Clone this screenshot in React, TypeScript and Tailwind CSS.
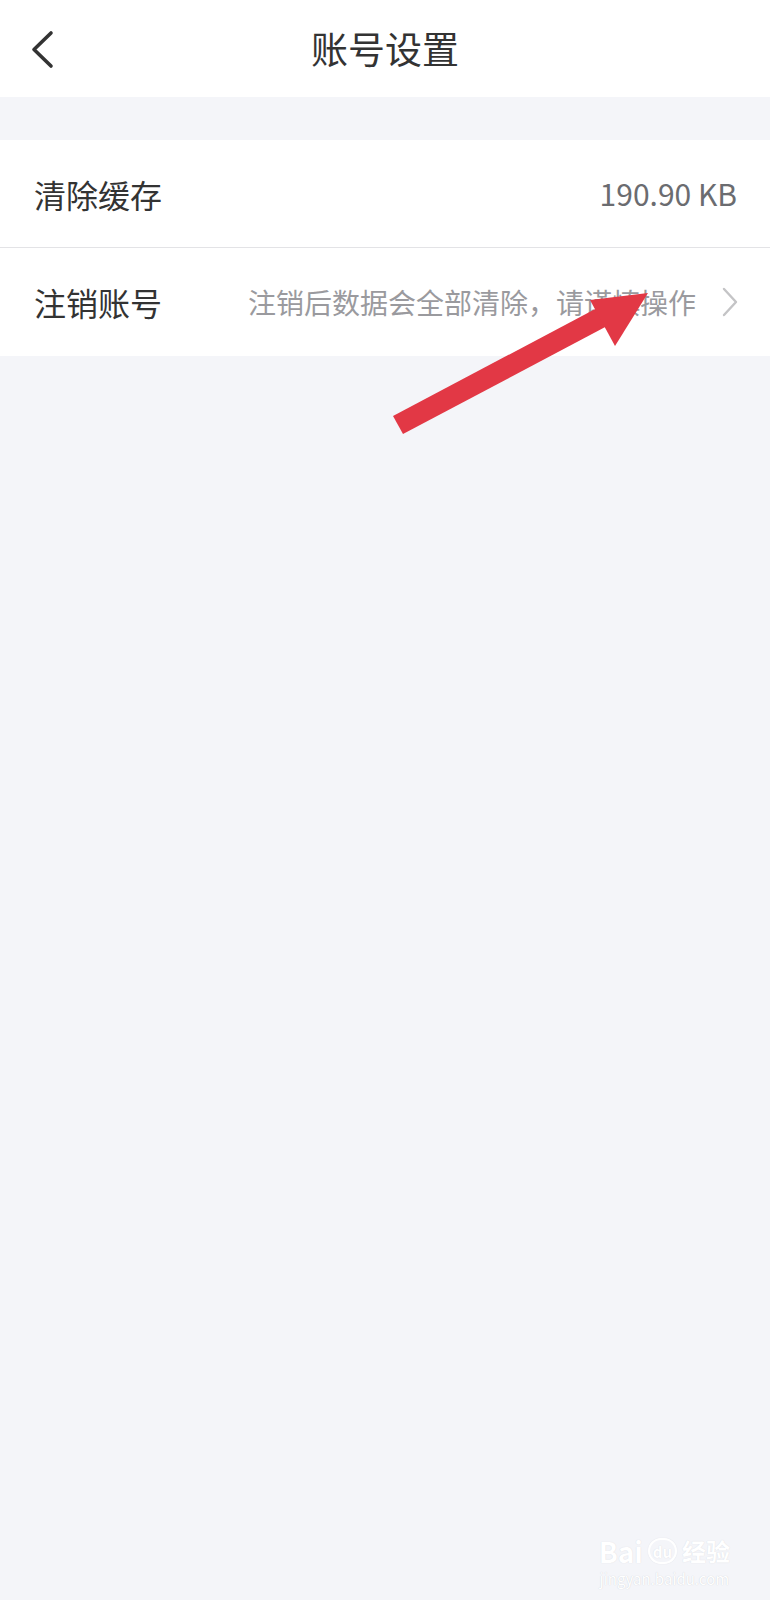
const font = { fontFamily: '"Noto Sans CJK SC", "Noto Sans", sans-serif' };

function BackIcon() {
  return (
    <svg width="24" height="40" viewBox="0 0 24 40" fill="none">
      <path d="M20 3 L3 19.5 L20 36" stroke="#333333" strokeWidth="3.6" strokeLinecap="round" strokeLinejoin="round" />
    </svg>
  );
}

function RowArrow() {
  return (
    <svg width="16" height="30" viewBox="0 0 16 30" fill="none">
      <path d="M2 2 L14 15 L2 28" stroke="#c4c4c6" strokeWidth="2.4" strokeLinecap="round" strokeLinejoin="round" />
    </svg>
  );
}

function RedArrow() {
  // annotation drawn over the page
  return (
    <svg className="absolute left-0 top-0 pointer-events-none" width="770" height="480" viewBox="0 0 770 480">
      <polygon points="393,416 403,434 609,325 599,307" fill="#e23845" />
      <polygon points="590,300 648,293 615,346" fill="#e23845" />
    </svg>
  );
}

function Watermark() {
  return (
    <div className="absolute right-[40px] bottom-[12px] flex flex-col items-center text-white select-none" style={font}>
      <div className="flex items-center gap-[5px] font-bold leading-[30px] [text-shadow:0_0_1px_#d4d6dc]">
        <span className="text-[28px]">Bai</span>
        <span className="flex h-[26px] items-center rounded-full border-2 border-white px-[3px] text-[15px] leading-none [box-shadow:0_0_1px_#d4d6dc]">du</span>
        <span className="text-[24px]">经验</span>
      </div>
      <div className="text-[15px] leading-[18px] mt-[4px] [text-shadow:0_0_1px_#c8cad0]">jingyan.baidu.com</div>
    </div>
  );
}

export default function App() {
  return (
    <div className="relative w-[770px] h-[1600px] bg-[#f4f5f9] overflow-hidden" style={font}>
      {/* Header */}
      <header className="h-[97px] bg-white flex items-center relative">
        <div className="pl-[31px] pt-[2px]">
          <BackIcon />
        </div>
        <h1 className="absolute left-0 right-0 text-center text-[37px] text-[#333333] leading-none pointer-events-none">
          账号设置
        </h1>
      </header>

      <div className="h-[43px]" />

      {/* List */}
      <div className="bg-white">
        <div className="h-[107px] flex items-center justify-between pl-[34px] pr-[33px]">
          <span className="text-[32px] text-[#333333]">清除缓存</span>
          <span className="text-[30px] text-[#6b6c70]">190.90 KB</span>
        </div>
        <div className="h-px bg-[#e3e3e6]" />
        <div className="h-[108px] flex items-center pl-[34px] pr-[32px]">
          <span className="text-[32px] text-[#333333]">注销账号</span>
          <div className="ml-auto flex items-center gap-[26px]">
            <span className="text-[28px] text-[#9a9a9e]">注销后数据会全部清除，请谨慎操作</span>
            <RowArrow />
          </div>
        </div>
      </div>

      <RedArrow />
      <Watermark />
    </div>
  );
}
